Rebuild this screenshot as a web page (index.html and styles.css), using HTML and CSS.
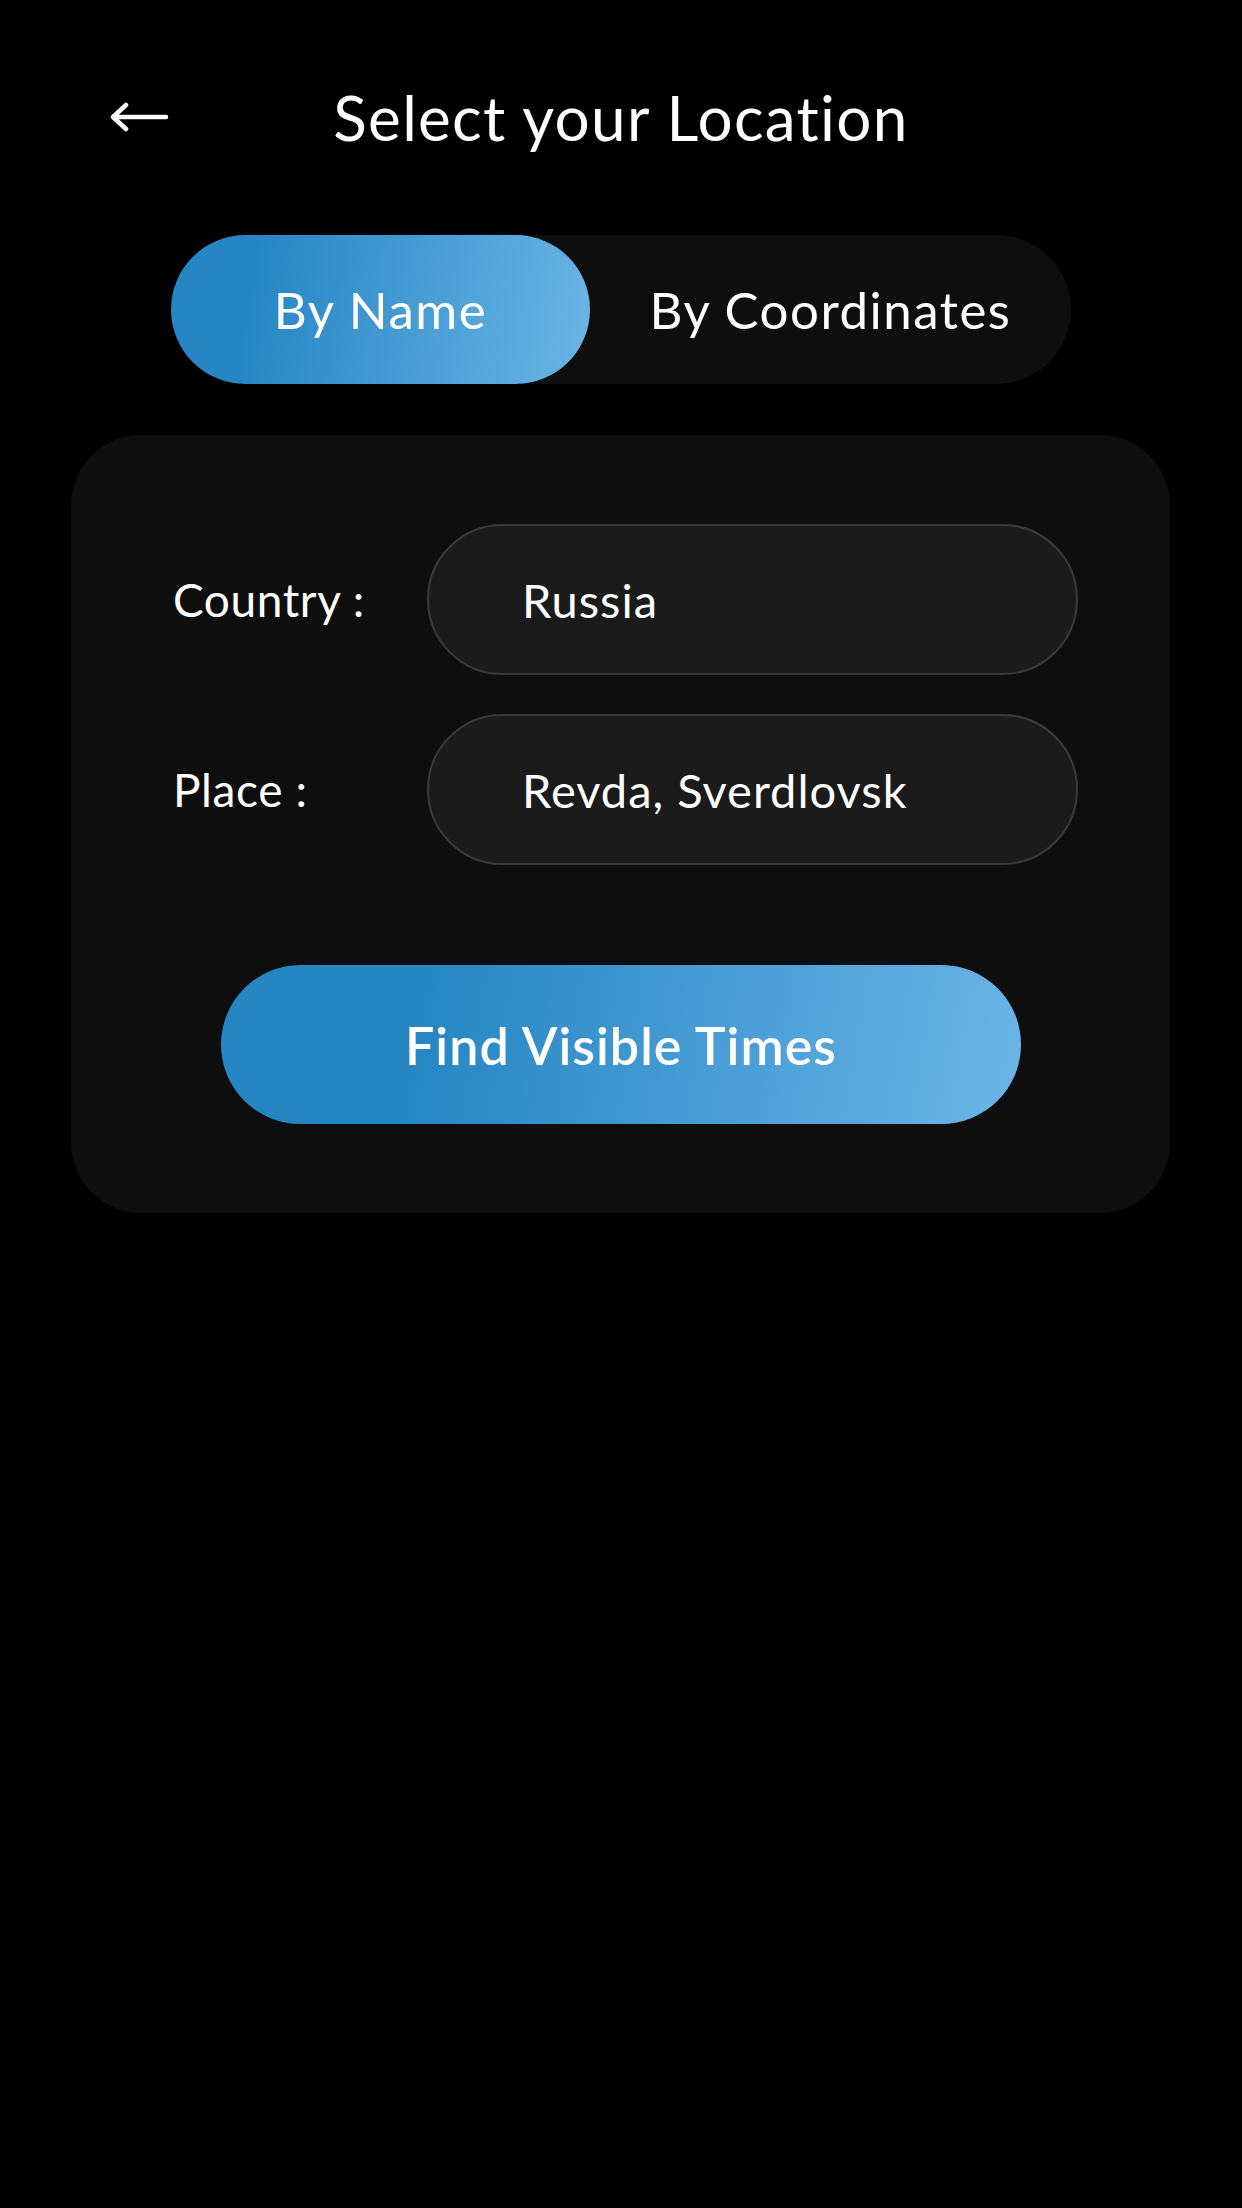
FILE: index.html
```html
<!DOCTYPE html>
<html>
<head>
<meta charset="utf-8">
<link rel="stylesheet" href="styles.css">
</head>
<body>
<div class="screen">
  <header class="header">
    <svg class="back" width="60" height="30" viewBox="0 0 60 30">
      <path d="M57 15H4M17 3L4 15L17 27" fill="none" stroke="#fff" stroke-width="4.5" stroke-linecap="round" stroke-linejoin="round"/>
    </svg>
    <h1 class="title">Select your Location</h1>
  </header>
  <div class="toggle">
    <div class="tab active">By Name</div>
    <div class="tab">By Coordinates</div>
  </div>
  <section class="card">
    <div class="row">
      <div class="label">Country :</div>
      <div class="field">Russia</div>
    </div>
    <div class="row">
      <div class="label">Place :</div>
      <div class="field">Revda, Sverdlovsk</div>
    </div>
    <button class="cta">Find Visible Times</button>
  </section>
</div>
</body>
</html>
```

FILE: styles.css
```css
* { box-sizing: border-box; }
html, body { margin: 0; padding: 0; background: #000; }
body { width: 1242px; height: 2208px; overflow: hidden; font-family: "Lato", "Noto Sans", sans-serif; color: #fff; }
.screen { display: flex; flex-direction: column; }
.header { position: relative; height: 234px; display: flex; align-items: center; justify-content: center; }
.back { position: absolute; left: 109px; top: 102px; }
.title { margin: 0; font-weight: 400; font-size: 62px; letter-spacing: 1.3px; }
.toggle { margin: 1px 0 0 171px; width: 900px; height: 149px; border-radius: 75px; background: #0e0e0e; display: flex; }
.tab { display: flex; align-items: center; justify-content: center; font-size: 51px; letter-spacing: 1.5px; height: 100%; border-radius: 75px; }
.tab.active { width: 419px; background: linear-gradient(100deg, #2686c4 20%, #6cb5e6 100%); }
.tab:not(.active) { flex: 1; }
.card { margin: 51px 0 0 71px; width: 1099px; background: #0e0e0e; border-radius: 70px; padding: 89px 92px 89px 102px; display: flex; flex-direction: column; gap: 39px; }
.row { display: flex; align-items: center; }
.label { width: 254px; font-size: 46px; letter-spacing: 0.6px; }
.field { width: 651px; height: 151px; border: 2px solid #3a3a3a; background: #1b1b1b; border-radius: 76px; display: flex; align-items: center; padding-left: 93px; font-size: 47px; letter-spacing: 1px; }
.cta { align-self: flex-start; margin: 61px 0 0 48px; width: 800px; height: 159px; border: 0; border-radius: 80px; background: linear-gradient(100deg, #2686c4 25%, #6cb5e6 100%); color: #fff; font-family: inherit; font-size: 52px; font-weight: 600; letter-spacing: 1px; }
```
